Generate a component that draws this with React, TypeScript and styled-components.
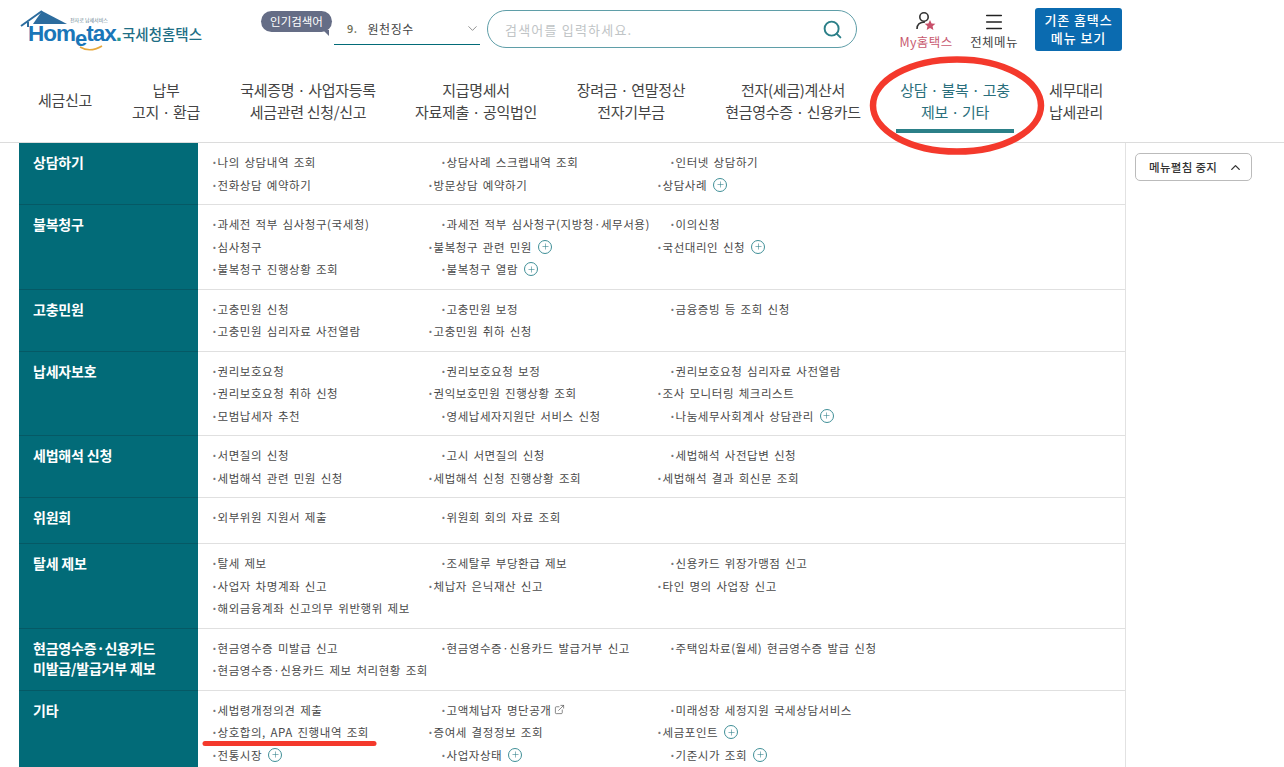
import React from 'react';
import styled, { createGlobalStyle } from 'styled-components';
import { ChevronDown, ChevronUp, Search, Menu, Plus, ExternalLink } from 'lucide-react';

const teal = '#026b78';
const KR = '"Noto Sans CJK KR", "Noto Sans", sans-serif';

const GlobalStyle = createGlobalStyle`
  html, body {
    margin: 0;
    padding: 0;
    background: #fff;
    font-family: ${KR};
    color: #444;
  }
`;

const Page = styled.div`
  position: relative;
  width: 1284px;
  height: 767px;
  overflow: hidden;
`;

const TopBar = styled.header`
  display: flex;
  align-items: flex-start;
  height: 67px;
`;

const Logo = styled.div`
  position: relative;
  width: 192px;
  margin: 9px 0 0 20px;
  height: 44px;
`;

const LogoArt = styled.svg`
  position: absolute;
  left: 0;
  top: 0;
`;

const LogoWord = styled.span`
  position: absolute;
  left: 8px;
  top: 15px;
  font: 700 22.5px/20px "Liberation Sans", sans-serif;
  letter-spacing: -1px;
  color: #1a76b8;
`;

const LogoLowE = styled.span`
  position: relative;
  top: 5px;
  font-size: 22px;
`;

const LogoDot = styled.span`
  color: #2a9a8c;
`;

const LogoTag = styled.span`
  position: absolute;
  left: 50px;
  top: 8px;
  font-size: 5px;
  line-height: 6px;
  color: #5f7f8f;
`;

const LogoName = styled.span`
  position: absolute;
  left: 102px;
  top: 15px;
  font-size: 14.5px;
  line-height: 20px;
  font-weight: 500;
  letter-spacing: 0;
  color: #1f6f86;
`;

const PopularBlock = styled.div`
  display: flex;
  align-items: flex-start;
  margin: 11px 0 0 49px;
`;

const PopularBadge = styled.span`
  position: relative;
  width: 71px;
  height: 21px;
  border-radius: 11px;
  background: #656d86;
  color: #fff;
  font-size: 11.5px;
  line-height: 20px;
  text-align: center;

  &::after {
    content: '';
    position: absolute;
    right: 3px;
    bottom: -4px;
    border-top: 6px solid #656d86;
    border-left: 6px solid transparent;
  }
`;

const KeywordSelect = styled.div`
  display: flex;
  align-items: center;
  width: 146px;
  height: 33px;
  margin: 1px 0 0 2px;
  padding: 0 0 0 13px;
  box-sizing: border-box;
  border-bottom: 1.5px solid ${teal};
  font-size: 12px;
  letter-spacing: 0.5px;
  color: #444;
`;

const KeywordIndex = styled.span`
  margin-right: 10px;
  font-size: 11px;
  font-weight: 500;
  color: #6b6b52;
`;

const SelectArrow = styled(ChevronDown)`
  margin-left: auto;
  color: #777;
`;

const SearchBox = styled.div`
  display: flex;
  align-items: center;
  justify-content: space-between;
  width: 370px;
  height: 38px;
  margin: 10px 0 0 7px;
  padding: 0 13px 0 17px;
  box-sizing: border-box;
  border: 1.5px solid #5f9ea8;
  border-radius: 20px;
  font-size: 13px;
  letter-spacing: 1.2px;
  color: #c0c4c6;
`;

const ToolLink = styled.div<{ $width: number; $color?: string; $left: number }>`
  display: flex;
  flex-direction: column;
  align-items: center;
  width: ${p => p.$width}px;
  margin: 11px 0 0 ${p => p.$left}px;
  font-size: 12.5px;
  line-height: 17px;
  letter-spacing: 0.4px;
  color: ${p => p.$color || '#444'};
  white-space: nowrap;
`;

const ToolIcon = styled.div`
  height: 22px;
`;

const OldMenuButton = styled.div`
  width: 87px;
  height: 43px;
  margin: 8px 0 0 13px;
  padding-top: 3px;
  box-sizing: border-box;
  border-radius: 3px;
  background: #0b6bb0;
  color: #fff;
  font-size: 13px;
  font-weight: 500;
  line-height: 18px;
  letter-spacing: 0.9px;
  text-align: center;
`;

const Nav = styled.nav`
  display: flex;
  align-items: flex-start;
  height: 75px;
  border-bottom: 1px solid #dcdcdc;
`;

const NavItem = styled.div<{ $width: number; $active?: boolean; $left?: number }>`
  width: ${p => p.$width}px;
  margin-left: ${p => p.$left || 0}px;
  height: 66px;
  padding-top: 11.5px;
  box-sizing: border-box;
  font-size: 15px;
  line-height: 22.5px;
  letter-spacing: -0.3px;
  text-align: center;
  white-space: nowrap;
  color: ${p => (p.$active ? '#2a6f7c' : '#444')};
  border-bottom: ${p => (p.$active ? '4px solid #2b8088' : 'none')};
`;

const NavSingle = styled(NavItem)`
  padding-top: 22px;
`;

const Body = styled.div`
  display: flex;
  align-items: flex-start;
  padding-left: 19px;
`;

const Board = styled.div`
  width: 1106px;
  border-right: 1px solid #e2e2e2;
`;

const Row = styled.section`
  display: flex;
  min-height: 45px;
  border-bottom: 1px solid #e0e0e0;
`;

const RowTitle = styled.h3`
  flex: 0 0 179px;
  margin: 0 0 -1px;
  padding: 9px 0 0 14px;
  box-sizing: border-box;
  background: ${teal};
  border-bottom: 1px solid #055965;
  color: #fff;
  font-size: 14px;
  font-weight: 700;
  line-height: 20px;
  letter-spacing: -0.2px;
`;

const RowLines = styled.div`
  flex: 1;
  padding: 8px 0 8px 13px;
`;

const Line = styled.div<{ $tight?: boolean }>`
  display: grid;
  grid-template-columns: ${p => (p.$tight ? '216px 229px 1fr' : '229px 229px 1fr')};
  height: 22.5px;
  align-items: center;
`;

const Item = styled.span`
  display: flex;
  align-items: center;
  font-size: 11.5px;
  line-height: 22px;
  letter-spacing: 0.55px;
  word-spacing: 1.6px;
  color: #4a4a4a;
  white-space: nowrap;

  &::before {
    content: '·';
    width: 6.5px;
    color: #777;
    font-weight: 700;
  }
`;

const PlusMark = styled.span`
  display: inline-flex;
  align-items: center;
  justify-content: center;
  width: 14px;
  height: 14px;
  margin-left: 6px;
  border: 1px solid #3f8f97;
  border-radius: 50%;
  box-sizing: border-box;
  color: #2f7f8a;
`;

const OutLink = styled(ExternalLink)`
  margin-left: 3px;
  color: #555;
`;

const SideColumn = styled.aside`
  padding: 10px 0 0 9px;
`;

const FoldButton = styled.div`
  display: flex;
  align-items: center;
  justify-content: space-between;
  width: 117px;
  height: 28px;
  padding: 0 8px 0 13px;
  box-sizing: border-box;
  border: 1px solid #bbb;
  border-radius: 5px;
  background: #fff;
  font-size: 11.5px;
  font-weight: 500;
  letter-spacing: 0.3px;
  color: #333;
`;

const Annotation = styled.svg`
  position: absolute;
  left: 0;
  top: 0;
  pointer-events: none;
`;

type Entry = string | { label: string; plus?: boolean; out?: boolean };
type Group = { title: string[]; lines: Entry[][] };

const groups: Group[] = [
  {
    title: ['상담하기'],
    lines: [
      ['나의 상담내역 조회', '상담사례 스크랩내역 조회', '인터넷 상담하기'],
      ['전화상담 예약하기', '방문상담 예약하기', { label: '상담사례', plus: true }],
    ],
  },
  {
    title: ['불복청구'],
    lines: [
      ['과세전 적부 심사청구(국세청)', '과세전 적부 심사청구(지방청·세무서용)', '이의신청'],
      ['심사청구', { label: '불복청구 관련 민원', plus: true }, { label: '국선대리인 신청', plus: true }],
      ['불복청구 진행상황 조회', { label: '불복청구 열람', plus: true }],
    ],
  },
  {
    title: ['고충민원'],
    lines: [
      ['고충민원 신청', '고충민원 보정', '금융증빙 등 조회 신청'],
      ['고충민원 심리자료 사전열람', '고충민원 취하 신청'],
    ],
  },
  {
    title: ['납세자보호'],
    lines: [
      ['권리보호요청', '권리보호요청 보정', '권리보호요청 심리자료 사전열람'],
      ['권리보호요청 취하 신청', '권익보호민원 진행상황 조회', '조사 모니터링 체크리스트'],
      ['모범납세자 추천', '영세납세자지원단 서비스 신청', { label: '나눔세무사회계사 상담관리', plus: true }],
    ],
  },
  {
    title: ['세법해석 신청'],
    lines: [
      ['서면질의 신청', '고시 서면질의 신청', '세법해석 사전답변 신청'],
      ['세법해석 관련 민원 신청', '세법해석 신청 진행상황 조회', '세법해석 결과 회신문 조회'],
    ],
  },
  {
    title: ['위원회'],
    lines: [['외부위원 지원서 제출', '위원회 회의 자료 조회']],
  },
  {
    title: ['탈세 제보'],
    lines: [
      ['탈세 제보', '조세탈루 부당환급 제보', '신용카드 위장가맹점 신고'],
      ['사업자 차명계좌 신고', '체납자 은닉재산 신고', '타인 명의 사업장 신고'],
      ['해외금융계좌 신고의무 위반행위 제보'],
    ],
  },
  {
    title: ['현금영수증·신용카드', '미발급/발급거부 제보'],
    lines: [
      ['현금영수증 미발급 신고', '현금영수증·신용카드 발급거부 신고', '주택임차료(월세) 현금영수증 발급 신청'],
      ['현금영수증·신용카드 제보 처리현황 조회'],
    ],
  },
  {
    title: ['기타'],
    lines: [
      ['세법령개정의견 제출', { label: '고액체납자 명단공개', out: true }, '미래성장 세정지원 국세상담서비스'],
      ['상호합의, APA 진행내역 조회', '증여세 결정정보 조회', { label: '세금포인트', plus: true }],
      [{ label: '전통시장', plus: true }, { label: '사업자상태', plus: true }, { label: '기준시가 조회', plus: true }],
    ],
  },
];

const navItems = [
  { lines: ['납부', '고지 · 환급'], width: 98, left: 6 },
  { lines: ['국세증명 · 사업자등록', '세금관련 신청/신고'], width: 150, left: 18 },
  { lines: ['지급명세서', '자료제출 · 공익법인'], width: 130, left: 28 },
  { lines: ['장려금 · 연말정산', '전자기부금'], width: 120, left: 30 },
  { lines: ['전자(세금)계산서', '현금영수증 · 신용카드'], width: 140, left: 32 },
  { lines: ['상담 · 불복 · 고충', '제보 · 기타'], width: 118, left: 33, active: true },
  { lines: ['세무대리', '납세관리'], width: 70, left: 27 },
];

function renderEntry(entry: Entry, key: number) {
  const item = typeof entry === 'string' ? { label: entry } as { label: string; plus?: boolean; out?: boolean } : entry;
  return (
    <Item key={key}>
      {item.label}
      {item.plus && <PlusMark><Plus size={9} strokeWidth={1.5} /></PlusMark>}
      {item.out && <OutLink size={11} strokeWidth={1.5} />}
    </Item>
  );
}

export default function App() {
  return (
    <Page>
      <GlobalStyle />
      <TopBar>
        <Logo>
          <LogoArt width="112" height="44" viewBox="0 0 112 44">
            <path d="M22 2 L47 15 L13 15 Z" fill="#2c6c9e" />
            <path d="M1 17 L22 2" stroke="#2c6c9e" strokeWidth="2" fill="none" />
            <path d="M8 13 L8 18" stroke="#2c6c9e" strokeWidth="2" fill="none" />
            <path d="M60 38 Q70 44 82 37" stroke="#e8a83a" strokeWidth="1.6" fill="none" />
          </LogoArt>
          <LogoTag>전자로 납세서비스</LogoTag>
          <LogoWord>Hom<LogoLowE>e</LogoLowE>tax<LogoDot>.</LogoDot></LogoWord>
          <LogoName>국세청홈택스</LogoName>
        </Logo>
        <PopularBlock>
          <PopularBadge>인기검색어</PopularBadge>
          <KeywordSelect>
            <KeywordIndex>9.</KeywordIndex>
            원천징수
            <SelectArrow size={15} strokeWidth={1.3} />
          </KeywordSelect>
        </PopularBlock>
        <SearchBox>
          검색어를 입력하세요.
          <Search size={21} strokeWidth={2.2} color="#2b7f88" />
        </SearchBox>
        <ToolLink $width={60} $left={39} $color="#c8596f">
          <ToolIcon>
            <svg width="24" height="22" viewBox="0 0 24 22">
              <circle cx="10" cy="6" r="4.2" fill="none" stroke="#333" strokeWidth="1.6" />
              <path d="M3 18 C3 12 8 11 11 11" fill="none" stroke="#333" strokeWidth="1.6" />
              <path d="M16 9 L17.6 12.4 L21.4 12.8 L18.6 15.3 L19.4 19 L16 17.1 L12.7 19 L13.5 15.3 L10.7 12.8 L14.4 12.4 Z" fill="#c8506a" />
            </svg>
          </ToolIcon>
          My홈택스
        </ToolLink>
        <ToolLink $width={56} $left={10}>
          <ToolIcon>
            <Menu size={22} strokeWidth={1.6} color="#222" />
          </ToolIcon>
          전체메뉴
        </ToolLink>
        <OldMenuButton>기존 홈택스<br />메뉴 보기</OldMenuButton>
      </TopBar>
      <Nav>
        <NavSingle $width={92} $left={19}>세금신고</NavSingle>
        {navItems.map(nav => (
          <NavItem key={nav.lines[0]} $width={nav.width} $left={nav.left} $active={nav.active}>
            {nav.lines[0]}<br />{nav.lines[1]}
          </NavItem>
        ))}
      </Nav>
      <Body>
        <Board>
          {groups.map(group => (
            <Row key={group.title[0]}>
              <RowTitle>
                {group.title.map(text => <div key={text}>{text}</div>)}
              </RowTitle>
              <RowLines>
                {group.lines.map((line, i) => (
                  <Line key={i} $tight={i % 2 === 1}>
                    {line.map(renderEntry)}
                  </Line>
                ))}
              </RowLines>
            </Row>
          ))}
        </Board>
        <SideColumn>
          <FoldButton>메뉴펼침 중지 <ChevronUp size={15} strokeWidth={2.2} /></FoldButton>
        </SideColumn>
      </Body>
      <Annotation width="1284" height="767" viewBox="0 0 1284 767">
        <ellipse cx="957" cy="105.5" rx="84" ry="46" fill="none" stroke="#f4392c" strokeWidth="6.5" />
        <path d="M205 743.5 L374 743.5" stroke="#f4392c" strokeWidth="5" strokeLinecap="round" />
      </Annotation>
    </Page>
  );
}
